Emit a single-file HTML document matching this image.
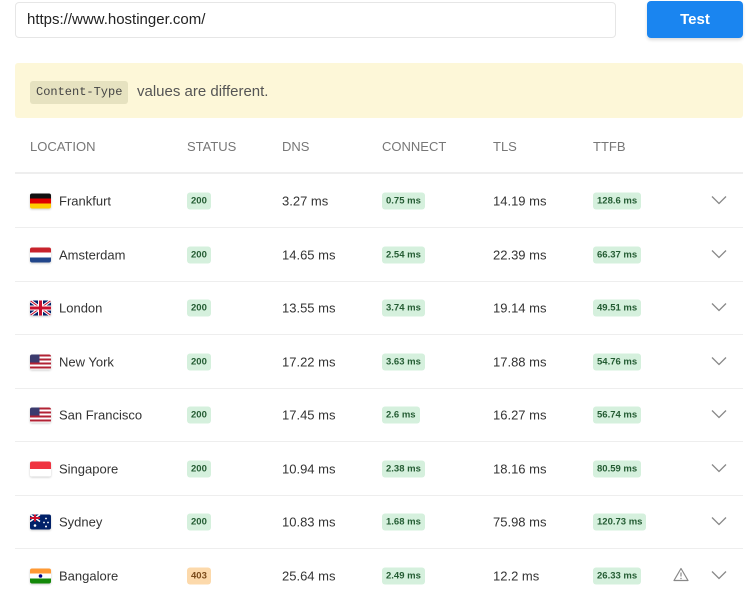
<!DOCTYPE html>
<html><head><meta charset="utf-8"><style>
*{box-sizing:border-box;margin:0;padding:0}
body{width:753px;height:597px;background:#fff;font-family:"Liberation Sans",sans-serif;color:#333;position:relative;overflow:hidden;font-size:13px}
.inp{position:absolute;left:15px;top:2px;width:601px;height:36px;border:1px solid #e6e6e6;border-radius:4px;font-size:15px;line-height:34px;padding-left:11px;color:#222}
.btn{position:absolute;left:647px;top:1px;width:96px;height:37px;background:#1a85f0;border-radius:4px;color:#fff;font-weight:bold;font-size:15px;text-align:center;line-height:37px;box-shadow:0 2px 3px rgba(0,0,0,.15)}
.warn{position:absolute;left:15px;top:63px;width:728px;height:55px;background:#fdf7d8;border-radius:3px}
.code{position:absolute;left:15px;top:18px;height:23px;padding:0 6px;background:#e6e2c0;border-radius:3px;font-family:"Liberation Mono",monospace;font-size:12px;line-height:23px;color:#444}
.wt{position:absolute;left:122px;top:20px;font-size:15px;color:#555}
.hd{position:absolute;top:139px;font-size:13px;color:#777}
.hl{position:absolute;left:15px;top:172px;width:728px;height:2px;background:#eee}
.row{position:absolute;left:15px;width:728px;height:54px;border-bottom:1px solid #eee}
.row span{position:absolute;top:50%;transform:translateY(-50%);white-space:nowrap}
.b{font-size:9.5px;font-weight:bold;background:#d5f0dd;color:#245c33;padding:3px 4px;border-radius:3px}
.o{background:#fcd9ab;color:#7a4a1a}
.flag{width:21px;height:15px;border-radius:2px;overflow:hidden;box-shadow:0 1px 2px rgba(0,0,0,.2)}
.chev{left:696px}
</style></head><body>
<div class="inp">https://www.hostinger.com/</div>
<div class="btn">Test</div>
<div class="warn"><div class="code">Content-Type</div><div class="wt">values are different.</div></div>
<div class="hd" style="left:30px">LOCATION</div>
<div class="hd" style="left:187px">STATUS</div>
<div class="hd" style="left:282px">DNS</div>
<div class="hd" style="left:382px">CONNECT</div>
<div class="hd" style="left:493px">TLS</div>
<div class="hd" style="left:593px">TTFB</div>
<div class="hl"></div>

<div class="row" style="top:174px">
<span class="flag" style="left:15px;background:linear-gradient(#111 0 33%,#d00 33% 66%,#fc0 66%)"></span>
<span style="left:44px">Frankfurt</span><span class="b" style="left:172px">200</span><span style="left:267px">3.27 ms</span><span class="b" style="left:367px">0.75 ms</span><span style="left:478px">14.19 ms</span><span class="b" style="left:578px">128.6 ms</span>
<span class="chev"><svg width="16" height="10"><path d="M1 1l7 7 7-7" stroke="#888" fill="none" stroke-width="1.3"/></svg></span></div>

<div class="row" style="top:228px">
<span class="flag" style="left:15px;background:linear-gradient(#c8232c 0 33%,#fff 33% 66%,#21468b 66%)"></span>
<span style="left:44px">Amsterdam</span><span class="b" style="left:172px">200</span><span style="left:267px">14.65 ms</span><span class="b" style="left:367px">2.54 ms</span><span style="left:478px">22.39 ms</span><span class="b" style="left:578px">66.37 ms</span>
<span class="chev"><svg width="16" height="10"><path d="M1 1l7 7 7-7" stroke="#888" fill="none" stroke-width="1.3"/></svg></span></div>

<div class="row" style="top:281px">
<span class="flag" style="left:15px"><svg width="21" height="15"><rect width="21" height="15" fill="#012169"/><path d="M0 0L21 15M21 0L0 15" stroke="#fff" stroke-width="3"/><path d="M0 0L21 15M21 0L0 15" stroke="#c8102e" stroke-width="1"/><path d="M10.5 0V15M0 7.5H21" stroke="#fff" stroke-width="5"/><path d="M10.5 0V15M0 7.5H21" stroke="#c8102e" stroke-width="3"/></svg></span>
<span style="left:44px">London</span><span class="b" style="left:172px">200</span><span style="left:267px">13.55 ms</span><span class="b" style="left:367px">3.74 ms</span><span style="left:478px">19.14 ms</span><span class="b" style="left:578px">49.51 ms</span>
<span class="chev"><svg width="16" height="10"><path d="M1 1l7 7 7-7" stroke="#888" fill="none" stroke-width="1.3"/></svg></span></div>

<div class="row" style="top:335px">
<span class="flag" style="left:15px;background:linear-gradient(90deg,#3c3b6e 0 45%,transparent 45%) 0 0/100% 55% no-repeat,repeating-linear-gradient(#b22234 0 2px,#fff 2px 4px)"></span>
<span style="left:44px">New York</span><span class="b" style="left:172px">200</span><span style="left:267px">17.22 ms</span><span class="b" style="left:367px">3.63 ms</span><span style="left:478px">17.88 ms</span><span class="b" style="left:578px">54.76 ms</span>
<span class="chev"><svg width="16" height="10"><path d="M1 1l7 7 7-7" stroke="#888" fill="none" stroke-width="1.3"/></svg></span></div>

<div class="row" style="top:388px">
<span class="flag" style="left:15px;background:linear-gradient(90deg,#3c3b6e 0 45%,transparent 45%) 0 0/100% 55% no-repeat,repeating-linear-gradient(#b22234 0 2px,#fff 2px 4px)"></span>
<span style="left:44px">San Francisco</span><span class="b" style="left:172px">200</span><span style="left:267px">17.45 ms</span><span class="b" style="left:367px">2.6 ms</span><span style="left:478px">16.27 ms</span><span class="b" style="left:578px">56.74 ms</span>
<span class="chev"><svg width="16" height="10"><path d="M1 1l7 7 7-7" stroke="#888" fill="none" stroke-width="1.3"/></svg></span></div>

<div class="row" style="top:442px">
<span class="flag" style="left:15px;background:linear-gradient(#ef3340 0 50%,#fff 50%)"></span>
<span style="left:44px">Singapore</span><span class="b" style="left:172px">200</span><span style="left:267px">10.94 ms</span><span class="b" style="left:367px">2.38 ms</span><span style="left:478px">18.16 ms</span><span class="b" style="left:578px">80.59 ms</span>
<span class="chev"><svg width="16" height="10"><path d="M1 1l7 7 7-7" stroke="#888" fill="none" stroke-width="1.3"/></svg></span></div>

<div class="row" style="top:495px">
<span class="flag" style="left:15px"><svg width="21" height="15"><rect width="21" height="15" fill="#012169"/><path d="M0 0L10 7M10 0L0 7" stroke="#fff" stroke-width="1.5"/><path d="M5 0V7M0 3.5H10" stroke="#c8102e" stroke-width="2"/><circle cx="5" cy="11" r="1.3" fill="#fff"/><circle cx="16" cy="4" r="0.9" fill="#fff"/><circle cx="14" cy="8" r="0.9" fill="#fff"/><circle cx="18" cy="8" r="0.9" fill="#fff"/><circle cx="16" cy="12" r="1" fill="#fff"/></svg></span>
<span style="left:44px">Sydney</span><span class="b" style="left:172px">200</span><span style="left:267px">10.83 ms</span><span class="b" style="left:367px">1.68 ms</span><span style="left:478px">75.98 ms</span><span class="b" style="left:578px">120.73 ms</span>
<span class="chev"><svg width="16" height="10"><path d="M1 1l7 7 7-7" stroke="#888" fill="none" stroke-width="1.3"/></svg></span></div>

<div class="row" style="top:549px;border-bottom:none">
<span class="flag" style="left:15px;background:linear-gradient(#f93 0 33%,#fff 33% 66%,#138808 66%)"><svg width="21" height="15" style="position:absolute;left:0;top:0"><circle cx="10.5" cy="7.5" r="1.8" fill="#008"/></svg></span>
<span style="left:44px">Bangalore</span><span class="b o" style="left:172px">403</span><span style="left:267px">25.64 ms</span><span class="b" style="left:367px">2.49 ms</span><span style="left:478px">12.2 ms</span><span class="b" style="left:578px">26.33 ms</span>
<span style="left:658px"><svg width="16" height="14"><path d="M8 1L15 13H1Z" stroke="#888" fill="none" stroke-width="1.2" stroke-linejoin="round"/><path d="M8 5V9" stroke="#888" stroke-width="1.2"/><circle cx="8" cy="11" r=".7" fill="#888"/></svg></span>
<span class="chev"><svg width="16" height="10"><path d="M1 1l7 7 7-7" stroke="#888" fill="none" stroke-width="1.3"/></svg></span></div>
</body></html>
